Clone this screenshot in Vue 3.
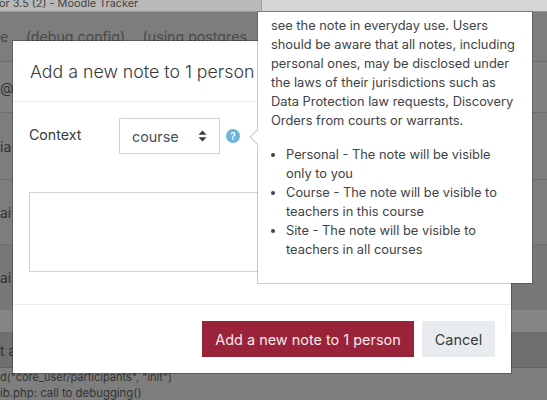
<script setup>
const rows = [
  { h: 50, cls: 'r1', parts: ['e', '(debug config)', '(using postgres'] },
  { h: 51, cls: 'r2', parts: ['@'] },
  { h: 67, cls: 'r3', parts: ['ia'] },
  { h: 65, cls: 'r4', parts: ['ai'] },
  { h: 65, cls: 'r5', parts: ['ai'] },
  { h: 23, cls: 'r6', parts: [] },
  { h: 35, cls: 'r7', parts: ['t a'] },
]
</script>

<template>
  <div class="page">
    <div class="topbar">
      <div class="tab active"><span>or 3.5 (2) - Moodle Tracker</span></div>
      <div class="tab"></div>
    </div>
    <div class="backdrop">
      <div v-for="(r, i) in rows" :key="i" class="row" :class="r.cls" :style="{ height: r.h + 'px' }">
        <span v-for="p in r.parts" :key="p">{{ p }}</span>
      </div>
      <div class="debug">
        <div class="d1">d("core_user/participants", "init")</div>
        <div>ib.php: call to debugging()</div>
      </div>
    </div>

    <div class="modal">
      <div class="modal-header">Add a new note to 1 person</div>
      <div class="modal-body">
        <div class="context-row">
          <span class="label">Context</span>
          <div class="select">
            <span>course</span>
            <svg class="updown" width="9" height="12" viewBox="0 0 9 12"><path d="M4.5 0.5 8.5 4.8H0.5ZM4.5 11.5 0.5 7.2H8.5Z" fill="#373a3c"/></svg>
          </div>
          <svg class="help" width="14" height="14" viewBox="0 0 14 14">
            <circle cx="7" cy="7" r="7" fill="#6eb3dc"/>
            <path d="M4.6 5.3C4.7 3.9 5.7 3.1 7.1 3.1 8.5 3.1 9.5 4 9.5 5.2 9.5 6.2 9 6.7 8.2 7.2 7.6 7.6 7.5 7.8 7.5 8.4H6.2C6.2 7.4 6.4 7 7.2 6.4 7.8 6 8.1 5.7 8.1 5.2 8.1 4.7 7.7 4.3 7.1 4.3 6.5 4.3 6.1 4.7 6 5.3Z" fill="#fff"/>
            <rect x="6.1" y="9.1" width="1.5" height="1.6" fill="#fff"/>
          </svg>
        </div>
        <div class="textarea"></div>
      </div>
      <div class="modal-footer">
        <button class="btn primary">Add a new note to 1 person</button>
        <button class="btn secondary">Cancel</button>
      </div>
    </div>

    <div class="popover">
      <span class="arrow"></span>
      <p>see the note in everyday use. Users should be aware that all notes, including personal ones, may be disclosed under the laws of their jurisdictions such as Data Protection law requests, Discovery Orders from courts or warrants.</p>
      <ul>
        <li>Personal - The note will be visible only to you</li>
        <li>Course - The note will be visible to teachers in this course</li>
        <li>Site - The note will be visible to teachers in all courses</li>
      </ul>
    </div>
  </div>
</template>

<style scoped>
.page {
  position: relative;
  width: 547px;
  height: 400px;
  overflow: hidden;
  background: #7e7e7e;
  font-family: Inter, Roboto, "Liberation Sans", sans-serif;
  color: #373a3c;
}
.topbar {
  height: 12px;
  box-sizing: border-box;
  border-bottom: 1px solid #9a9a9a;
  display: flex;
  font-size: 10.9px;
  line-height: 6px;
  color: #444;
  overflow: hidden;
  white-space: nowrap;
}
.tab { flex: 1; background: #d6d6d6; }
.tab.active { flex: none; width: 261px; background: #b9b9b9; border-right: 1px solid #a0a0a0; }
.tab span { margin-left: -1px; }
.backdrop { font-size: 14px; color: #333; }
.row {
  box-sizing: border-box;
  border-bottom: 1px solid #6e6e6e;
  display: flex;
  align-items: center;
  white-space: nowrap;
  overflow: hidden;
}
.r1 { background: #7d7d7d; align-items: flex-start; gap: 17.5px; padding-top: 16px; font-size: 14.2px; color: #4a4a4a; }
.r2 { background: #818181; }
.r3, .r4 { background: #7d7d7d; }
.r5 { background: #777; border-bottom: none; }
.r6 { background: #858585; border-bottom: 1px solid #6e6e6e; }
.r7 { background: #6f6f6f; border-bottom: 1px solid #636363; }
.debug {
  background: #7e7e7e;
  padding-top: 1px;
  font-size: 11.4px;
  line-height: 16px;
  color: #333;
  white-space: nowrap;
}
.d1 { font-size: 11px; }
.modal {
  position: absolute;
  left: 12px;
  top: 40px;
  width: 500px;
  height: 334px;
  box-sizing: border-box;
  background: #fff;
  background-clip: padding-box;
  border: 1px solid rgba(0, 0, 0, 0.24);
  display: flex;
  flex-direction: column;
}
.modal-header {
  height: 61px;
  box-sizing: border-box;
  border-bottom: 1px solid #e9ecef;
  padding: 17px 17px 0;
  font-size: 17.75px;
  line-height: 28px;
  font-weight: 300;
  color: #373a3c;
  white-space: nowrap;
}
.modal-body {
  height: 203px;
  box-sizing: border-box;
  padding: 16px 16px 0;
  display: flex;
  flex-direction: column;
  gap: 38px;
  border-bottom: 1px solid #e9ecef;
}
.context-row { display: flex; align-items: flex-start; height: 36px; }
.label { width: 90px; font-size: 14.2px; line-height: 34px; }
.select {
  width: 101px;
  height: 36px;
  box-sizing: border-box;
  border: 1px solid #ced4da;
  display: flex;
  align-items: center;
  justify-content: space-between;
  padding: 0 12px;
  font-size: 14.4px;
  color: #495057;
}
.help { margin: 11px 0 0 6px; }
.textarea {
  width: 300px;
  height: 80px;
  box-sizing: border-box;
  border: 1px solid #ced4da;
}
.modal-footer {
  flex: 1;
  padding: 16px 16px 0 0;
  display: flex;
  justify-content: flex-end;
  gap: 8px;
}
.btn {
  height: 36px;
  border: none;
  padding: 0;
  font-family: inherit;
  font-size: 14.45px;
}
.primary { width: 212px; background: #9a2339; color: #f6e9eb; }
.secondary { width: 73px; background: #e9ecef; color: #373a3c; }
.popover {
  position: absolute;
  left: 257px;
  top: 11px;
  width: 276px;
  height: 273px;
  box-sizing: border-box;
  background: #fff;
  background-clip: padding-box;
  border: 1px solid rgba(0, 0, 0, 0.2);
  padding: 4px 13px 0;
  font-size: 12.85px;
  line-height: 19px;
  color: #404346;
}
.popover p { margin: 0 0 15px; }
.popover ul { margin: 0; padding-left: 15px; }
.arrow {
  position: absolute;
  left: -6.5px;
  top: 118.5px;
  width: 12px;
  height: 12px;
  box-sizing: border-box;
  background: #fff;
  border-left: 1px solid #c8c8cc;
  border-bottom: 1px solid #c8c8cc;
  transform: rotate(45deg);
}
</style>

<style>
html, body { margin: 0; padding: 0; }
</style>
